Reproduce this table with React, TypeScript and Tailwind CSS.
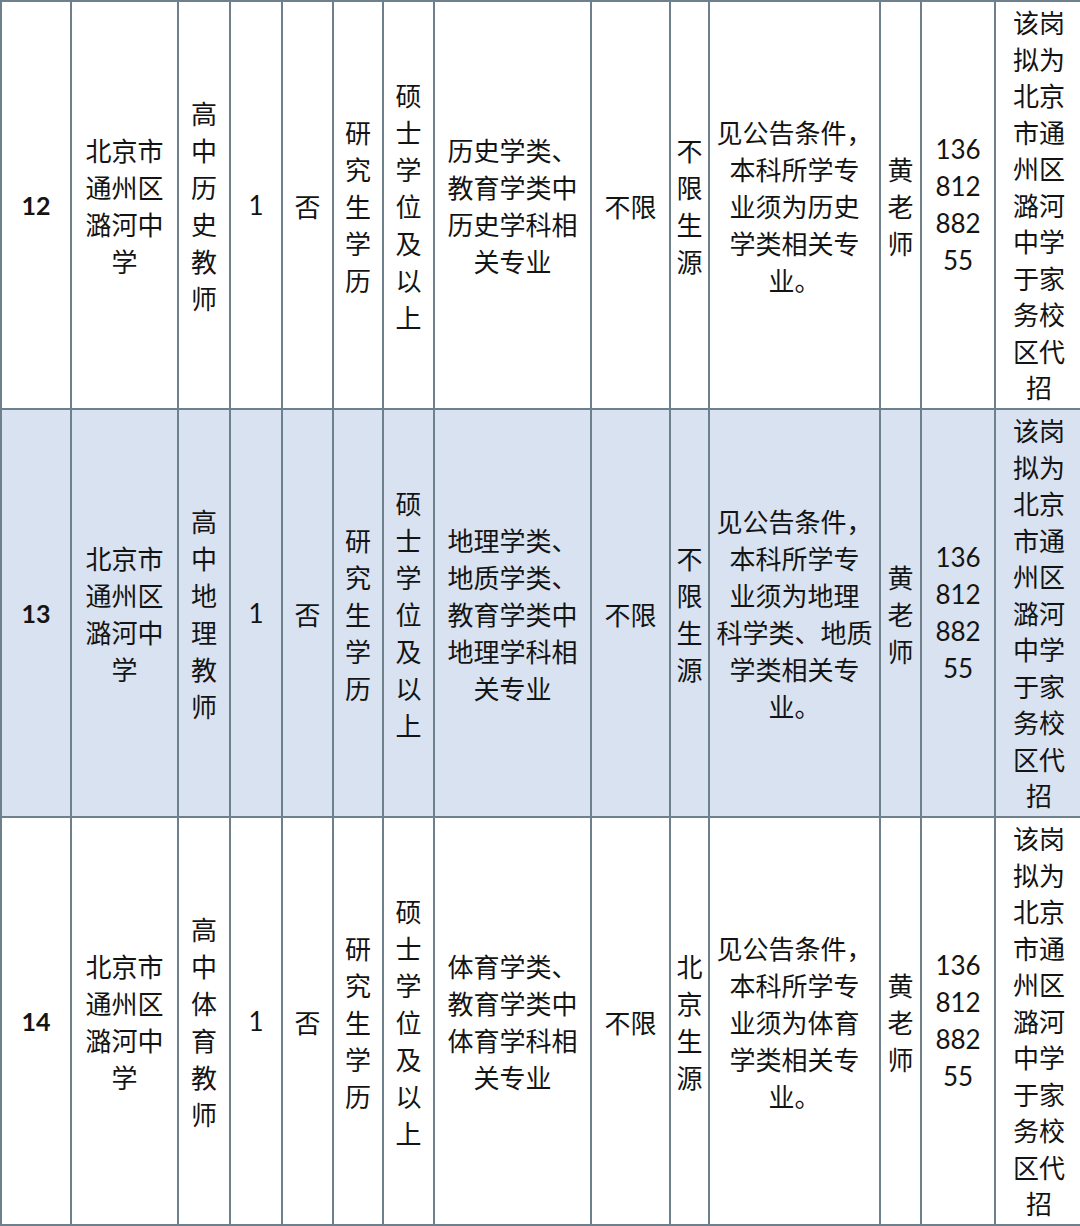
import React from 'react';

type Row = {
  no: string;
  subject: string;
  major: string[];
  source: string;
  note: string[];
  shade: boolean;
};

const rows: Row[] = [
  {
    no: '12',
    subject: '高中历史教师',
    major: ['历史学类、', '教育学类中', '历史学科相', '关专业'],
    source: '不限生源',
    note: ['见公告条件，', '本科所学专', '业须为历史', '学类相关专', '业。'],
    shade: false,
  },
  {
    no: '13',
    subject: '高中地理教师',
    major: ['地理学类、', '地质学类、', '教育学类中', '地理学科相', '关专业'],
    source: '不限生源',
    note: ['见公告条件，', '本科所学专', '业须为地理', '科学类、地质', '学类相关专', '业。'],
    shade: true,
  },
  {
    no: '14',
    subject: '高中体育教师',
    major: ['体育学类、', '教育学类中', '体育学科相', '关专业'],
    source: '北京生源',
    note: ['见公告条件，', '本科所学专', '业须为体育', '学类相关专', '业。'],
    shade: false,
  },
];

const remark = ['该岗', '拟为', '北京', '市通', '州区', '潞河', '中学', '于家', '务校', '区代', '招'];

// one glyph per line for the narrow columns
const chars = (s: string) => s.split('');

const Lines = ({ lines }: { lines: string[] }) => (
  <>
    {lines.map((l, i) => (
      <div key={i} className="whitespace-nowrap">
        {l}
      </div>
    ))}
  </>
);

const cell = 'border-2 border-[#6d808c] text-center align-middle p-0';

const App = () => {
  return (
    <div
      className="w-[1080px] h-[1226px] overflow-hidden bg-white text-[#141414]"
      style={{ fontFamily: '"Noto Sans CJK SC", "Noto Sans", sans-serif' }}
    >
      <table className="table-fixed border-collapse w-[1082px] text-[26px] leading-[37px]">
        <colgroup>
          <col className="w-[70px]" />
          <col className="w-[107px]" />
          <col className="w-[52px]" />
          <col className="w-[52px]" />
          <col className="w-[51px]" />
          <col className="w-[50px]" />
          <col className="w-[51px]" />
          <col className="w-[157px]" />
          <col className="w-[79px]" />
          <col className="w-[39px]" />
          <col className="w-[171px]" />
          <col className="w-[41px]" />
          <col className="w-[74px]" />
          <col className="w-[88px]" />
        </colgroup>
        <tbody>
          {rows.map((r) => (
            <tr key={r.no} className={`h-[408px] ${r.shade ? 'bg-[#d8e2f0]' : 'bg-white'}`}>
              <td className={`${cell} font-bold text-[25px] font-['Lato',sans-serif]`}>{r.no}</td>
              <td className={cell}>
                <Lines lines={['北京市', '通州区', '潞河中', '学']} />
              </td>
              <td className={cell}>
                <Lines lines={chars(r.subject)} />
              </td>
              <td className={`${cell} font-['Lato',sans-serif]`}>1</td>
              <td className={cell}>否</td>
              <td className={cell}>
                <Lines lines={chars('研究生学历')} />
              </td>
              <td className={cell}>
                <Lines lines={chars('硕士学位及以上')} />
              </td>
              <td className={cell}>
                <Lines lines={r.major} />
              </td>
              <td className={cell}>不限</td>
              <td className={cell}>
                <Lines lines={chars(r.source)} />
              </td>
              <td className={cell}>
                <Lines lines={r.note} />
              </td>
              <td className={cell}>
                <Lines lines={chars('黄老师')} />
              </td>
              <td className={`${cell} font-['Lato',sans-serif]`}>
                <Lines lines={['136', '812', '882', '55']} />
              </td>
              <td className={`${cell} leading-[36.5px]`}>
                <Lines lines={remark} />
              </td>
            </tr>
          ))}
        </tbody>
      </table>
    </div>
  );
};

export default App;
